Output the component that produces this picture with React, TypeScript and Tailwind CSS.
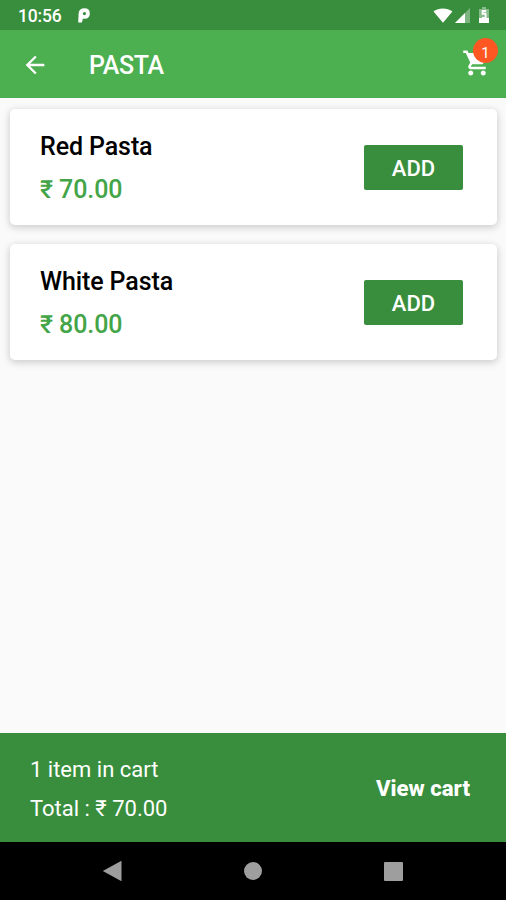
function StatusBar() {
  return (
    <div className="flex h-[30px] shrink-0 items-center bg-[#388e3c] pl-[18px] pr-[17px] text-white">
      <span className="w-[60px] pt-[2px] text-[17.5px] font-medium leading-5 tracking-[-0.2px]">10:56</span>
      <svg className="h-[15px] w-[12px]" viewBox="0 0 12 15">
        <path
          d="M.2 14.6L.6 5.4Q1.2.3 6.4.3Q11.8.3 11.8 5.4Q11.8 10.4 6.8 10.8H4.8Q4.4 13.6 3.8 14.6zM6.6 4Q4.8 4 4.8 5.6Q4.8 7.2 6.4 7.2Q8 7.2 8 5.5Q8 4 6.6 4z"
          fill="#fff"
          fillRule="evenodd"
        />
      </svg>
      <div className="ml-auto flex items-center">
        <svg className="h-[15px] w-[20px]" viewBox="0 0 20 15">
          <path d="M.5 3.6C5.6-.7 14.2-.7 19.4 3.6L10 14.8z" fill="#fff" />
        </svg>
        <svg className="ml-[2px] h-[15px] w-[15px]" viewBox="0 0 15 15">
          <path d="M0 15L15 0v15z" fill="#fff" opacity=".35" />
          <path d="M0 15L10 5v10z" fill="#fff" />
        </svg>
        <svg className="ml-[9px] h-[16px] w-[10px]" viewBox="0 0 10 16">
          <path d="M3 0h4v2h3v9H0V2h3z" fill="#fff" opacity=".4" />
          <path d="M0 11h10v5H0z" fill="#fff" />
          <path d="M7.2 4H3.6v2.8h3V11H3" fill="none" stroke="#fff" strokeWidth="1.9" />
        </svg>
      </div>
    </div>
  );
}

function AppBar() {
  return (
    <header className="flex h-[68px] shrink-0 items-center bg-[#4caf50] pl-[21px] pr-[14px] text-white">
      <svg className="mt-px h-7 w-7" viewBox="0 0 24 24" fill="currentColor">
        <path d="M20 11H7.83l5.59-5.59L12 4l-8 8 8 8 1.41-1.41L7.83 13H20v-2z" />
      </svg>
      <h1 className="ml-[40px] mt-[4px] text-[25px] font-medium leading-8 tracking-[-0.35px]">PASTA</h1>
      <div className="relative mb-[2px] ml-auto h-[30px] w-[30px]">
        <svg className="h-[30px] w-[30px]" viewBox="0 0 24 24" fill="currentColor">
          <path d="M7 18c-1.1 0-1.99.9-1.99 2S5.9 22 7 22s2-.9 2-2-.9-2-2-2zM1 2v2h2l3.6 7.59-1.35 2.45c-.16.28-.25.61-.25.96 0 1.1.9 2 2 2h12v-2H7.42c-.14 0-.25-.11-.25-.25l.03-.12.9-1.63h7.45c.75 0 1.41-.41 1.75-1.03l3.58-6.49c.08-.14.12-.31.12-.48 0-.55-.45-1-1-1H5.21l-.94-2H1zm16 16c-1.1 0-1.99.9-1.99 2s.89 2 1.99 2 2-.9 2-2-.9-2-2-2z" />
        </svg>
        <span className="absolute left-[11px] top-[-10px] flex h-[25px] w-[25px] items-center justify-center rounded-full bg-[#ff5722] pt-[5px] text-[15px] leading-none">
          1
        </span>
      </div>
    </header>
  );
}

function ItemCard({ name, price }: { name: string; price: string }) {
  return (
    <div className="flex h-[116px] items-center justify-between rounded-[5px] bg-white pl-[30px] pr-[34px] shadow-[0_2px_7px_1px_rgba(0,0,0,0.17)]">
      <div className="flex flex-col gap-[11px] pt-[3px] text-[25px] font-medium leading-8 tracking-[-0.1px]">
        <div className="text-black">{name}</div>
        <div className="text-[#43a547]">₹ {price}</div>
      </div>
      <button className="h-[45px] w-[99px] rounded-[2px] bg-[#388e3c] pt-[2px] text-[22px] font-medium text-white">
        ADD
      </button>
    </div>
  );
}

export default function App() {
  return (
    <div className="flex h-[900px] w-[506px] flex-col overflow-hidden bg-[#fafafa] font-['Roboto','Noto_Sans',sans-serif]">
      <StatusBar />
      <AppBar />
      <main className="flex flex-1 flex-col gap-[19px] pl-[10px] pr-[9px] pt-[11px]">
        <ItemCard name="Red Pasta" price="70.00" />
        <ItemCard name="White Pasta" price="80.00" />
      </main>
      <footer className="flex h-[109px] shrink-0 items-center justify-between bg-[#388e3c] pl-[30px] pr-[36px] pt-[2px] text-[22px] text-white">
        <div className="flex flex-col gap-[7px] pt-px leading-8">
          <div>1 item in cart</div>
          <div>Total : ₹ 70.00</div>
        </div>
        <div className="mb-[2px] text-[22.2px] font-extrabold leading-8">View cart</div>
      </footer>
      <nav className="flex h-[58px] shrink-0 items-center bg-black pl-[102px] text-[#9e9e9e]">
        <svg className="h-[22px] w-[20px]" viewBox="0 0 20 22" fill="currentColor">
          <path d="M19.5 .8v20.4L.8 11z" />
        </svg>
        <div className="ml-[122px] h-[18px] w-[18px] rounded-full bg-[#9e9e9e]" />
        <div className="ml-[122px] h-[19px] w-[19px] rounded-[1px] bg-[#9e9e9e]" />
      </nav>
    </div>
  );
}
